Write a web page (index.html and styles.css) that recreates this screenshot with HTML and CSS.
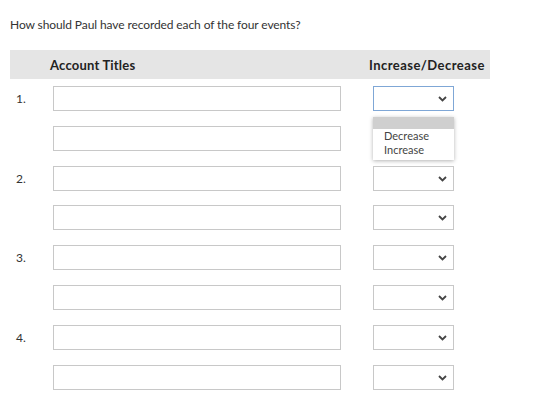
FILE: index.html
```html
<!DOCTYPE html>
<html>
<head>
    <title>Journal Entries</title>
    <link rel="stylesheet" href="styles.css">
</head>
<body>
    <p class="question">How should Paul have recorded each of the four events?</p>
    <div class="sheet">
        <div class="sheet-head">
            <div class="head-num"></div>
            <div class="head-title">Account Titles</div>
            <div class="head-change">Increase/Decrease</div>
        </div>

        <div class="row">
            <div class="num">1.</div>
            <div class="field"></div>
            <div class="pick focused">
                <span class="chev"><svg width="9" height="6" viewBox="0 0 9 6"><path d="M1 1l3.5 3.5L8 1" fill="none" stroke="#444" stroke-width="1.8"/></svg></span>
                <div class="menu">
                    <div class="menu-blank"></div>
                    <div class="menu-item">Decrease</div>
                    <div class="menu-item">Increase</div>
                </div>
            </div>
        </div>
        <div class="row">
            <div class="num"></div>
            <div class="field"></div>
            <div class="pick"></div>
        </div>

        <div class="row">
            <div class="num">2.</div>
            <div class="field"></div>
            <div class="pick"><span class="chev"><svg width="9" height="6" viewBox="0 0 9 6"><path d="M1 1l3.5 3.5L8 1" fill="none" stroke="#444" stroke-width="1.8"/></svg></span></div>
        </div>
        <div class="row">
            <div class="num"></div>
            <div class="field"></div>
            <div class="pick"><span class="chev"><svg width="9" height="6" viewBox="0 0 9 6"><path d="M1 1l3.5 3.5L8 1" fill="none" stroke="#444" stroke-width="1.8"/></svg></span></div>
        </div>

        <div class="row">
            <div class="num">3.</div>
            <div class="field"></div>
            <div class="pick"><span class="chev"><svg width="9" height="6" viewBox="0 0 9 6"><path d="M1 1l3.5 3.5L8 1" fill="none" stroke="#444" stroke-width="1.8"/></svg></span></div>
        </div>
        <div class="row">
            <div class="num"></div>
            <div class="field"></div>
            <div class="pick"><span class="chev"><svg width="9" height="6" viewBox="0 0 9 6"><path d="M1 1l3.5 3.5L8 1" fill="none" stroke="#444" stroke-width="1.8"/></svg></span></div>
        </div>

        <div class="row">
            <div class="num">4.</div>
            <div class="field"></div>
            <div class="pick"><span class="chev"><svg width="9" height="6" viewBox="0 0 9 6"><path d="M1 1l3.5 3.5L8 1" fill="none" stroke="#444" stroke-width="1.8"/></svg></span></div>
        </div>
        <div class="row">
            <div class="num"></div>
            <div class="field"></div>
            <div class="pick"><span class="chev"><svg width="9" height="6" viewBox="0 0 9 6"><path d="M1 1l3.5 3.5L8 1" fill="none" stroke="#444" stroke-width="1.8"/></svg></span></div>
        </div>
    </div>
</body>
</html>
```

FILE: styles.css
```css
body {
    margin: 0;
    padding: 0 10px;
    font-family: Lato, "Liberation Sans", sans-serif;
    color: #333;
    background: #fff;
}
.question {
    margin: 17px 0 0;
    font-size: 12px;
    line-height: 16px;
    letter-spacing: -0.1px;
}
.sheet {
    margin-top: 17px;
    width: 480px;
}
.sheet-head {
    display: flex;
    align-items: center;
    height: 29px;
    background: #e5e5e5;
    font-size: 13px;
    font-weight: bold;
    color: #222;
    margin-bottom: 7px;
    letter-spacing: 0.2px;
}
.head-num {
    width: 40px;
}
.head-title {
    width: 319px;
}
.head-change {
    white-space: nowrap;
    letter-spacing: 0.45px;
}
.row {
    display: flex;
    align-items: center;
    height: 25px;
    margin-bottom: 14.8px;
}
.num {
    width: 43px;
    padding-left: 6px;
    box-sizing: border-box;
    font-size: 12px;
    color: #333;
}
.field {
    width: 288px;
    height: 25px;
    box-sizing: border-box;
    border: 1px solid #c8c8c8;
    background: #fff;
}
.pick {
    position: relative;
    margin-left: 32px;
    width: 81px;
    height: 25px;
    box-sizing: border-box;
    border: 1px solid #c8c8c8;
    background: #fff;
}
.pick.focused {
    border-color: #7fa7d6;
}
.chev {
    position: absolute;
    right: 6px;
    top: 9px;
    line-height: 0;
}
.menu {
    position: absolute;
    left: -1px;
    top: 30px;
    width: 81px;
    background: #fff;
    box-shadow: 0 1px 4px rgba(0, 0, 0, 0.3);
    z-index: 2;
    padding-bottom: 3px;
}
.menu-blank {
    height: 12px;
    background: #cfcfcf;
}
.menu-item {
    padding-left: 11px;
    font-size: 11px;
    line-height: 14px;
    color: #444;
}
```
